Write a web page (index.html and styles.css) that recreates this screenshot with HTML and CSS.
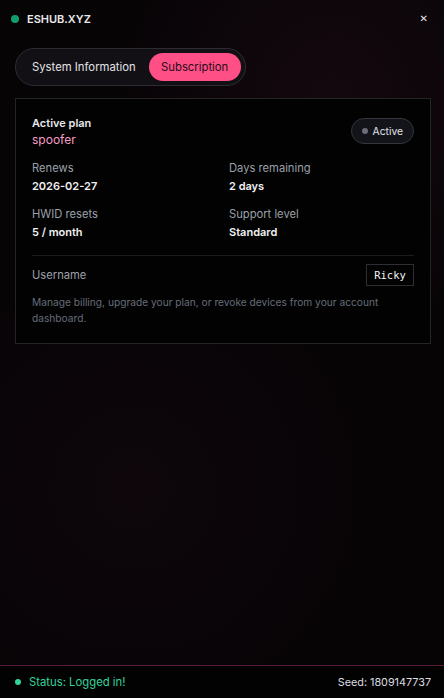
FILE: index.html
```html
<!DOCTYPE html>
<html>
<head>
<meta charset="utf-8">
<link rel="stylesheet" href="styles.css">
</head>
<body>
<div class="app">
  <header class="titlebar">
    <div class="brand"><span class="dot"></span><span class="brand-name">ESHUB.XYZ</span></div>
    <button class="close">&#x2715;</button>
  </header>
  <main class="content">
    <nav class="tabs">
      <button class="tab">System Information</button>
      <button class="tab active">Subscription</button>
    </nav>
    <section class="card">
      <div class="plan-row">
        <div class="plan">
          <div class="plan-title">Active plan</div>
          <div class="plan-name">spoofer</div>
        </div>
        <div class="badge"><span class="badge-dot"></span>Active</div>
      </div>
      <div class="grid">
        <div class="field"><div class="label">Renews</div><div class="value">2026-02-27</div></div>
        <div class="field"><div class="label">Days remaining</div><div class="value">2 days</div></div>
        <div class="field"><div class="label">HWID resets</div><div class="value">5 / month</div></div>
        <div class="field"><div class="label">Support level</div><div class="value">Standard</div></div>
      </div>
      <div class="divider"></div>
      <div class="user-row">
        <div class="label">Username</div>
        <div class="username">Ricky</div>
      </div>
      <p class="note">Manage billing, upgrade your plan, or revoke devices from your account dashboard.</p>
    </section>
  </main>
  <footer class="statusbar">
    <div class="status"><span class="sdot"></span>Status: Logged in!</div>
    <div class="seed">Seed: 1809147737</div>
  </footer>
</div>
</body>
</html>
```
FILE: styles.css
```css
* { box-sizing: border-box; }
html, body { margin: 0; padding: 0; height: 100%; }
body {
  font-family: Inter, "Noto Sans", sans-serif;
  background: #070406;
  color: #e5e7eb;
}
.app {
  height: 698px;
  display: flex;
  flex-direction: column;
  background:
    radial-gradient(ellipse 70% 50% at 75% 15%, rgba(40, 14, 28, 0.4), transparent 70%),
    radial-gradient(ellipse 80% 50% at 30% 70%, rgba(22, 8, 16, 0.45), transparent 70%),
    #070406;
}
.titlebar {
  height: 38px;
  display: flex;
  align-items: center;
  justify-content: space-between;
  padding: 0 16px 0 11px;
}
.brand { display: flex; align-items: center; gap: 8px; }
.dot { width: 8px; height: 8px; border-radius: 50%; background: #0f9d6b; }
.brand-name { font-size: 11px; font-weight: 600; color: #e8e8ea; }
.close {
  background: none; border: none; color: #e5e7eb; font-size: 10px; font-weight: 700;
  padding: 0; font-family: "DejaVu Sans", sans-serif; line-height: 1;
}
.content { flex: 1; padding: 10px 13px 0 15px; }
.tabs {
  display: inline-flex;
  align-items: center;
  gap: 13px;
  height: 38px;
  padding: 0 4px 0 16px;
  border: 1px solid #2e2c30;
  border-radius: 19px;
  background: #121014;
}
.tab {
  background: none; border: none; font-family: inherit; font-size: 11.3px;
  color: #e4e4e7; padding: 0; cursor: pointer;
}
.tab.active {
  background: #ff4f87;
  color: #2a0c17;
  height: 28px;
  width: 92px;
  padding: 0;
  border-radius: 14px;
}
.card {
  margin-top: 12px;
  border: 1px solid #242326;
  background: #020202;
  padding: 16px 16px 17px 16px;
}
.plan-row { display: flex; justify-content: space-between; align-items: flex-start; }
.plan-title { font-size: 11px; font-weight: 600; color: #e8e8ea; line-height: 16px; }
.plan-name { font-size: 12px; color: #f59cc4; line-height: 17px; }
.badge {
  margin-top: 3px;
  display: flex; align-items: center; gap: 5px;
  height: 26px; padding: 0 10px 0 10px;
  border: 1px solid #33353c; border-radius: 13px;
  background: #12141a;
  font-size: 10.3px; color: #e4e4e7;
}
.badge-dot { width: 6px; height: 6px; border-radius: 50%; background: #6b6e76; }
.grid {
  display: grid;
  grid-template-columns: 197px 1fr;
  row-gap: 12px;
  margin-top: 12px;
}
.label { font-size: 11.2px; color: #9aa0a9; line-height: 16px; }
.value { font-size: 11px; font-weight: 600; color: #f1f1f3; line-height: 16px; margin-top: 2px; }
.divider { height: 1px; background: #1c1c1e; margin: 15px 0 8px; }
.user-row { display: flex; justify-content: space-between; align-items: center; }
.username {
  font-family: "DejaVu Sans Mono", "Liberation Mono", monospace;
  font-size: 10.5px; color: #f1f1f3;
  height: 22px; line-height: 20px; width: 48px; text-align: center;
  border: 1px solid #2f2f33;
}
.note {
  margin: 8px 0 0;
  font-size: 10.2px; line-height: 16px; color: #666d7a;
}
.statusbar {
  height: 33px;
  border-top: 1px solid #5a1c3a;
  display: flex; align-items: center; justify-content: space-between;
  padding: 0 13px 0 15px;
  background: #030203;
  font-size: 11.3px;
}
.status { display: flex; align-items: center; gap: 8px; color: #34d399; }
.sdot { width: 6px; height: 6px; border-radius: 50%; background: #34d399; }
.seed { color: #dcdce0; font-size: 10.8px; }
```
